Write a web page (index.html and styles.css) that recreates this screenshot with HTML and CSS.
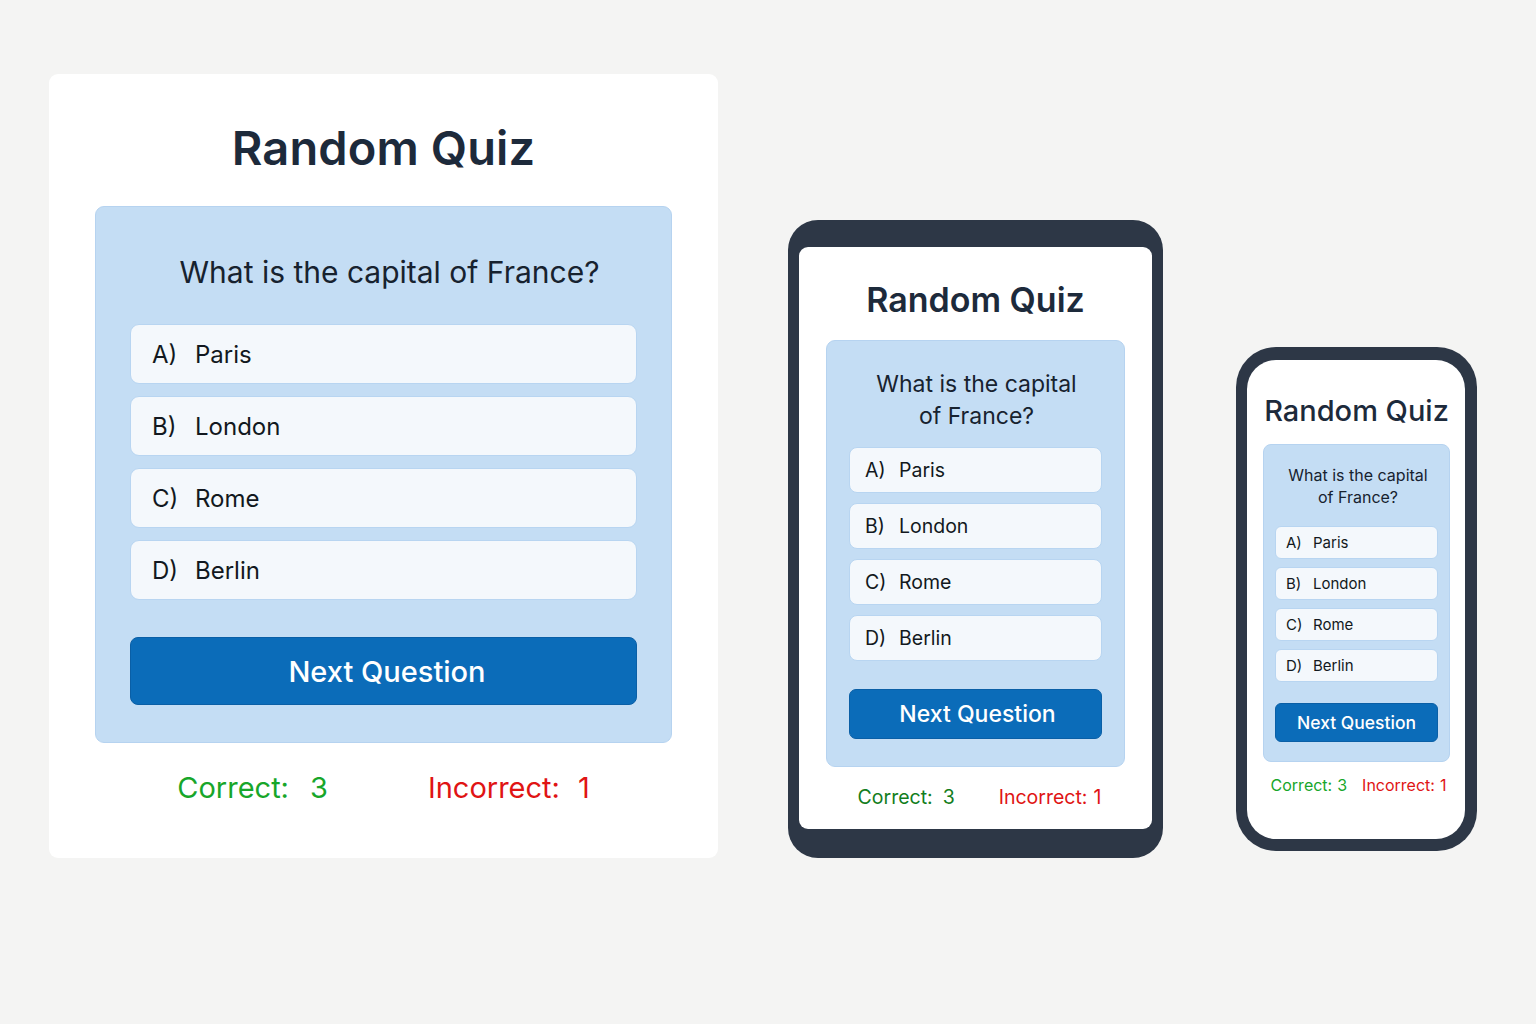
FILE: index.html
```html
<!DOCTYPE html>
<html lang="en">
<head>
<meta charset="utf-8">
<title>Random Quiz</title>
<link rel="stylesheet" href="styles.css">
</head>
<body>
<main class="stage">
  <section class="desk">
    <div class="quiz quiz-d">
      <h1 class="title">Random Quiz</h1>
      <div class="panel">
        <p class="question">What is the capital of France?</p>
        <ul class="options">
          <li class="option"><span class="lbl">A)</span><span>Paris</span></li>
          <li class="option"><span class="lbl">B)</span><span>London</span></li>
          <li class="option"><span class="lbl">C)</span><span>Rome</span></li>
          <li class="option"><span class="lbl">D)</span><span>Berlin</span></li>
        </ul>
        <button class="next">Next Question</button>
      </div>
      <div class="score">
        <span class="ok">Correct:<span class="num">3</span></span>
        <span class="bad">Incorrect:<span class="num">1</span></span>
      </div>
    </div>
  </section>

  <section class="tablet">
    <div class="screen-t">
      <div class="quiz quiz-t">
        <h1 class="title">Random Quiz</h1>
        <div class="panel">
          <p class="question">What is the capital<br>of France?</p>
          <ul class="options">
            <li class="option"><span class="lbl">A)</span><span>Paris</span></li>
            <li class="option"><span class="lbl">B)</span><span>London</span></li>
            <li class="option"><span class="lbl">C)</span><span>Rome</span></li>
            <li class="option"><span class="lbl">D)</span><span>Berlin</span></li>
          </ul>
          <button class="next">Next Question</button>
        </div>
        <div class="score">
          <span class="ok">Correct:<span class="num">3</span></span>
          <span class="bad">Incorrect:<span class="num">1</span></span>
        </div>
      </div>
    </div>
  </section>

  <section class="phone">
    <div class="screen-p">
      <div class="quiz quiz-p">
        <h1 class="title">Random Quiz</h1>
        <div class="panel">
          <p class="question">What is the capital<br>of France?</p>
          <ul class="options">
            <li class="option"><span class="lbl">A)</span><span>Paris</span></li>
            <li class="option"><span class="lbl">B)</span><span>London</span></li>
            <li class="option"><span class="lbl">C)</span><span>Rome</span></li>
            <li class="option"><span class="lbl">D)</span><span>Berlin</span></li>
          </ul>
          <button class="next">Next Question</button>
        </div>
        <div class="score">
          <span class="ok">Correct:<span class="num">3</span></span>
          <span class="bad">Incorrect:<span class="num">1</span></span>
        </div>
      </div>
    </div>
  </section>
</main>
</body>
</html>
```

FILE: styles.css
```css
* { box-sizing: border-box; }
html, body { margin: 0; padding: 0; }
body {
  background: #f4f4f3;
  font-family: Inter, "Noto Sans", "Liberation Sans", sans-serif;
  width: 1536px;
  height: 1024px;
  overflow: hidden;
}
.stage {
  display: flex;
  align-items: flex-end;
  padding: 74px 0 0 49px;
  height: 784px;
  box-sizing: content-box;
}

/* generic quiz parts */
.quiz { display: flex; flex-direction: column; }
.title { margin: 0; text-align: center; color: #1d2a3b; }
.panel {
  background: #c4ddf4;
  border: 1px solid #b6d3f0;
  display: flex;
  flex-direction: column;
}
.question { margin: 0; text-align: center; color: #17222f; }
.options { list-style: none; margin: 0; padding: 0; display: flex; flex-direction: column; }
.option {
  display: flex;
  align-items: center;
  background: #f4f8fc;
  border: 1px solid #b8d5f1;
  color: #121820;
}
.next {
  display: block;
  width: 100%;
  background: #0b6cb9;
  border: 1px solid #0a5fa6;
  color: #ffffff;
  font-family: inherit;
  font-weight: 500;
  padding: 0;
  cursor: pointer;
}
.score { display: flex; justify-content: center; }
.ok { color: #17a62a; }
.bad { color: #e01414; }

/* desktop */
.desk {
  width: 669px;
  height: 784px;
  background: #ffffff;
  border-radius: 9px;
  padding: 44px 46px 0;
}
.quiz-d .title { font-size: 47px; line-height: 60px; font-weight: 600; margin-bottom: 28px; letter-spacing: 0.1px; }
.quiz-d .panel { height: 537px; border-radius: 9px; padding: 45px 34px 0; }
.quiz-d .question { font-size: 30px; line-height: 40px; margin-bottom: 32px; padding-left: 12px; }
.quiz-d .options { gap: 12px; }
.quiz-d .option { height: 60px; border-radius: 9px; padding-left: 21px; font-size: 24px; }
.quiz-d .lbl { width: 43px; }
.quiz-d .next { height: 68px; margin-top: 37px; border-radius: 8px; font-size: 29px; padding-left: 7px; }
.quiz-d .score { margin-top: 25px; font-size: 29px; line-height: 40px; gap: 100px; }
.quiz-d .num { margin-left: 21px; }
.quiz-d .bad .num { margin-left: 18px; }

/* tablet */
.tablet {
  margin-left: 70px;
  width: 375px;
  height: 638px;
  background: #2d3746;
  border-radius: 30px;
  padding: 27px 11px 29px;
}
.screen-t {
  background: #ffffff;
  border-radius: 9px;
  height: 100%;
  padding: 31px 27px 0;
}
.quiz-t .title { font-size: 34px; line-height: 44px; font-weight: 600; margin-bottom: 18px; }
.quiz-t .panel { height: 427px; border-radius: 9px; padding: 27px 22px 0; }
.quiz-t .question { font-size: 23px; line-height: 32px; margin-bottom: 15px; padding-left: 2px; }
.quiz-t .options { gap: 10px; }
.quiz-t .option { height: 46px; border-radius: 8px; padding-left: 15px; font-size: 19.5px; }
.quiz-t .lbl { width: 34px; }
.quiz-t .next { height: 50px; margin-top: 28px; border-radius: 7px; font-size: 23px; padding-left: 4px; }
.quiz-t .score { margin-top: 16px; font-size: 19.5px; line-height: 28px; gap: 44px; padding-left: 8px; }
.quiz-t .ok { color: #127d20; }
.quiz-t .num { margin-left: 10px; }
.quiz-t .bad .num { margin-left: 6px; }

/* phone */
.phone {
  margin-left: 73px;
  margin-bottom: 7px;
  width: 241px;
  height: 504px;
  background: #2d3746;
  border-radius: 40px;
  padding: 13px 12px 12px 11px;
}
.screen-p {
  background: #ffffff;
  border-radius: 29px;
  height: 100%;
  padding: 33px 15px 0 16px;
}
.quiz-p .title { font-size: 29px; line-height: 36px; font-weight: 500; margin-bottom: 15px; white-space: nowrap; }
.quiz-p .panel { height: 318px; border-radius: 8px; padding: 19px 11px 0; }
.quiz-p .question { font-size: 16px; line-height: 22px; margin-bottom: 18px; padding-left: 3px; }
.quiz-p .options { gap: 8px; }
.quiz-p .option { height: 33px; border-radius: 6px; padding-left: 10px; font-size: 15px; }
.quiz-p .lbl { width: 27px; }
.quiz-p .next { height: 39px; margin-top: 21px; border-radius: 6px; font-size: 17.5px; }
.quiz-p .score { margin-top: 13px; font-size: 16px; line-height: 20px; gap: 15px; white-space: nowrap; padding-left: 4px; }
.quiz-p .num { margin-left: 5px; }
```
